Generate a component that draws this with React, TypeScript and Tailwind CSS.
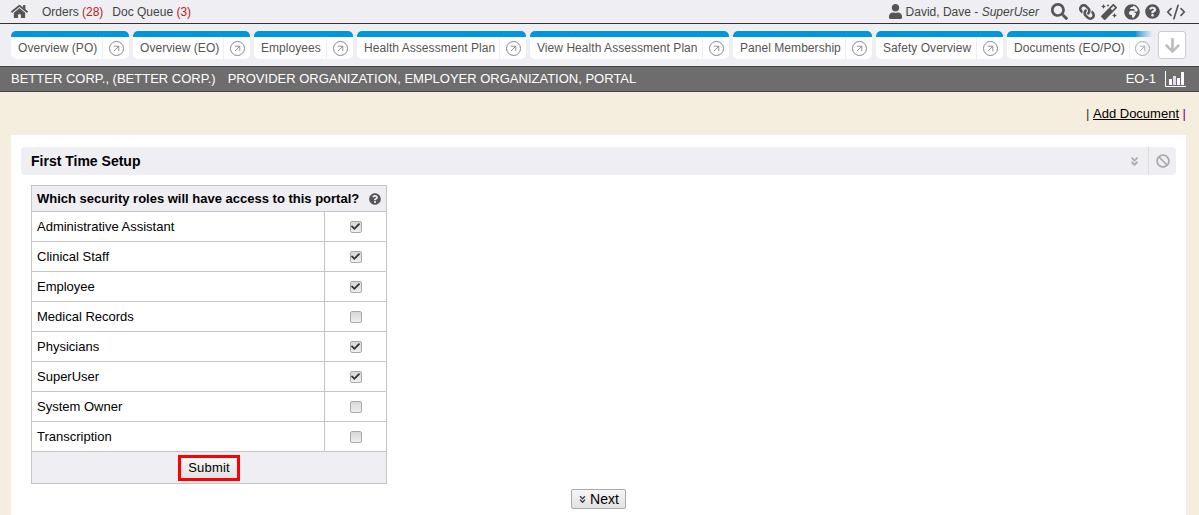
import { FaAngleDoubleDown, FaArrowDown, FaBan, FaCheck, FaGlobeAfrica, FaHome, FaLink, FaMagic, FaQuestionCircle, FaSearch, FaUser } from "react-icons/fa";
import { FiArrowUpRight } from "react-icons/fi";
import { LuCodeXml } from "react-icons/lu";

const tabs = [
  { label: "Overview (PO)", width: "w-[118px]" },
  { label: "Overview (EO)", width: "w-[117px]" },
  { label: "Employees", width: "w-[99px]" },
  { label: "Health Assessment Plan", width: "w-[169px]" },
  { label: "View Health Assessment Plan", width: "w-[199px]" },
  { label: "Panel Membership", width: "w-[139px]" },
  { label: "Safety Overview", width: "w-[127px]" },
];

const roles = [
  { name: "Administrative Assistant", checked: true },
  { name: "Clinical Staff", checked: true },
  { name: "Employee", checked: true },
  { name: "Medical Records", checked: false },
  { name: "Physicians", checked: true },
  { name: "SuperUser", checked: true },
  { name: "System Owner", checked: false },
  { name: "Transcription", checked: false },
];

function Tab({ label, width }: { label: string; width: string }) {
  return (
    <div className={`${width} flex h-[28px] shrink-0 flex-col overflow-hidden rounded-[5px] bg-white`}>
      <div className="h-[6px] bg-[#0097dc]" />
      <div className="flex flex-1 items-center">
        <span className="flex-1 pl-[7px] text-[12px] tracking-[0.05px] whitespace-nowrap text-[#555]">{label}</span>
        <span className="flex h-full w-[27px] items-center justify-center border-l border-[#eeeef3]">
          <span className="flex h-[15px] w-[15px] items-center justify-center rounded-full border border-[#888]">
            <FiArrowUpRight className="text-[11px] text-[#888]" />
          </span>
        </span>
      </div>
    </div>
  );
}

function Check({ checked }: { checked: boolean }) {
  return (
    <span className="flex h-[12px] w-[12px] items-center justify-center rounded-[2px] border border-[#aaa] bg-gradient-to-b from-[#d8d8d8] to-[#eee]">
      {checked ? <FaCheck className="text-[9px] text-[#333]" /> : null}
    </span>
  );
}

function BarsIcon() {
  return (
    <svg width="21" height="16" viewBox="0 0 21 16" className="ml-[9px]">
      <path d="M0.5 0v15.5H21" stroke="#fff" fill="none" />
      <rect x="4" y="8" width="3" height="6" fill="#fff" />
      <rect x="8" y="5" width="3" height="9" fill="#e9d6f2" />
      <rect x="12" y="7" width="3" height="7" fill="#fff" />
      <rect x="16" y="1" width="3" height="13" fill="#fff" />
    </svg>
  );
}

export default function App() {
  return (
    <div className="flex h-[515px] w-[1199px] flex-col overflow-hidden bg-[#f5eddd] font-['Liberation_Sans',Arial,sans-serif]">
      {/* top nav */}
      <div className="flex h-[24px] items-center border-b border-[#333] bg-[#eeeef3] pr-[13px] pl-[11px] text-[12px] text-[#444]">
        <FaHome className="text-[17px] text-[#555]" />
        <span className="ml-[14px]">
          Orders <span className="text-[#b22]">(28)</span>
        </span>
        <span className="ml-[9px]">
          Doc Queue <span className="text-[#b22]">(3)</span>
        </span>
        <div className="ml-auto flex items-center">
          <FaUser className="text-[15px] text-[#555]" />
          <span className="ml-[3px]">
            David, Dave - <em>SuperUser</em>
          </span>
          <FaSearch className="ml-[12px] text-[17px] text-[#555]" />
          <FaLink className="ml-[11px] -scale-x-100 text-[16px] text-[#555]" />
          <FaMagic className="ml-[6px] text-[16px] text-[#555]" />
          <FaGlobeAfrica className="ml-[7px] text-[16px] text-[#555]" />
          <FaQuestionCircle className="ml-[5px] text-[15px] text-[#555]" />
          <LuCodeXml className="ml-[6px] text-[20px] text-[#555]" />
        </div>
      </div>

      {/* tab strip */}
      <div className="flex h-[42px] items-center gap-[4px] bg-[#eeeef3] pr-[13px] pl-[11px]">
        {tabs.map((tab) => (
          <Tab key={tab.label} label={tab.label} width={tab.width} />
        ))}
        <div className="flex h-[28px] w-[146px] shrink-0 flex-col overflow-hidden rounded-l-[5px] bg-gradient-to-r from-white from-[88%] to-[#eeeef3]">
          <div className="h-[6px] bg-gradient-to-r from-[#0097dc] from-[88%] to-[#eeeef3]" />
          <div className="flex flex-1 items-center">
            <span className="flex-1 pl-[7px] text-[12px] tracking-[0.05px] whitespace-nowrap text-[#555]">Documents (EO/PO)</span>
            <span className="flex h-full w-[24px] items-center border-l border-[#eeeef3] pl-[5px]">
              <span className="flex h-[15px] w-[15px] items-center justify-center rounded-full border border-[#aaa]">
                <FiArrowUpRight className="text-[11px] text-[#aaa]" />
              </span>
            </span>
          </div>
        </div>
        <div className="ml-[1px] flex h-[28px] w-[28px] shrink-0 items-center justify-center rounded-[3px] border border-[#ccc] bg-white">
          <FaArrowDown className="text-[17px] text-[#bbb]" />
        </div>
      </div>

      {/* org bar */}
      <div className="flex h-[26px] items-center border-y border-[#444] bg-[#6d6d6d] pr-[13px] pl-[11px] text-[13px] text-white">
        <span>BETTER CORP., (BETTER CORP.)</span>
        <span className="ml-[12px]">PROVIDER ORGANIZATION, EMPLOYER ORGANIZATION, PORTAL</span>
        <span className="ml-auto">EO-1</span>
        <BarsIcon />
      </div>

      {/* actions */}
      <div className="flex h-[43px] items-center justify-end pr-[13px] text-[13px] text-[#333]">
        <span>|&nbsp;</span>
        <span className="text-black underline">Add Document</span>
        <span className="text-[#800080]">&nbsp;|</span>
      </div>

      {/* panel */}
      <div className="mr-[13px] ml-[11px] flex-1 bg-white px-[10px] pt-[12px]">
        <div className="flex h-[28px] items-center rounded-[4px] bg-[#eeeef3] pl-[10px] text-[14px] font-bold text-black">
          First Time Setup
          <FaAngleDoubleDown className="ml-auto text-[11px] text-[#aaa]" />
          <span className="ml-[8px] flex h-full w-[28px] items-center justify-center border-l border-[#ddd]">
            <FaBan className="text-[14px] text-[#aaa]" />
          </span>
        </div>

        <div className="mt-[10px] ml-[10px] w-[356px] border border-[#c4c4c4] text-[13px] text-black">
          <div className="flex h-[25px] items-center bg-[#eeeef3] pl-[5px] font-bold whitespace-nowrap">
            Which security roles will have access to this portal?
            <FaQuestionCircle className="ml-[10px] text-[12px] text-[#555]" />
          </div>
          {roles.map((role) => (
            <div key={role.name} className="flex h-[30px] border-t border-[#c4c4c4]">
              <div className="flex flex-1 items-center pl-[5px]">{role.name}</div>
              <div className="flex w-[62px] items-center justify-center border-l border-[#c4c4c4]">
                <Check checked={role.checked} />
              </div>
            </div>
          ))}
          <div className="flex h-[32px] items-center justify-center border-t border-[#c4c4c4] bg-[#eeeef3]">
            <button className="flex h-[26px] w-[62px] items-center justify-center border-[3px] border-[#f00] bg-gradient-to-b from-[#f6f6f6] to-[#e2e2e2] text-[13px] tracking-[0.2px]">Submit</button>
          </div>
        </div>

        <div className="mt-[5px] flex justify-center">
          <button className="flex h-[20px] w-[55px] items-center justify-center gap-[3px] rounded-[2px] border border-[#aaa] bg-gradient-to-b from-[#f6f6f6] to-[#e2e2e2] text-[14px]">
            <FaAngleDoubleDown className="text-[9px] text-[#444]" />
            Next
          </button>
        </div>
      </div>
    </div>
  );
}
